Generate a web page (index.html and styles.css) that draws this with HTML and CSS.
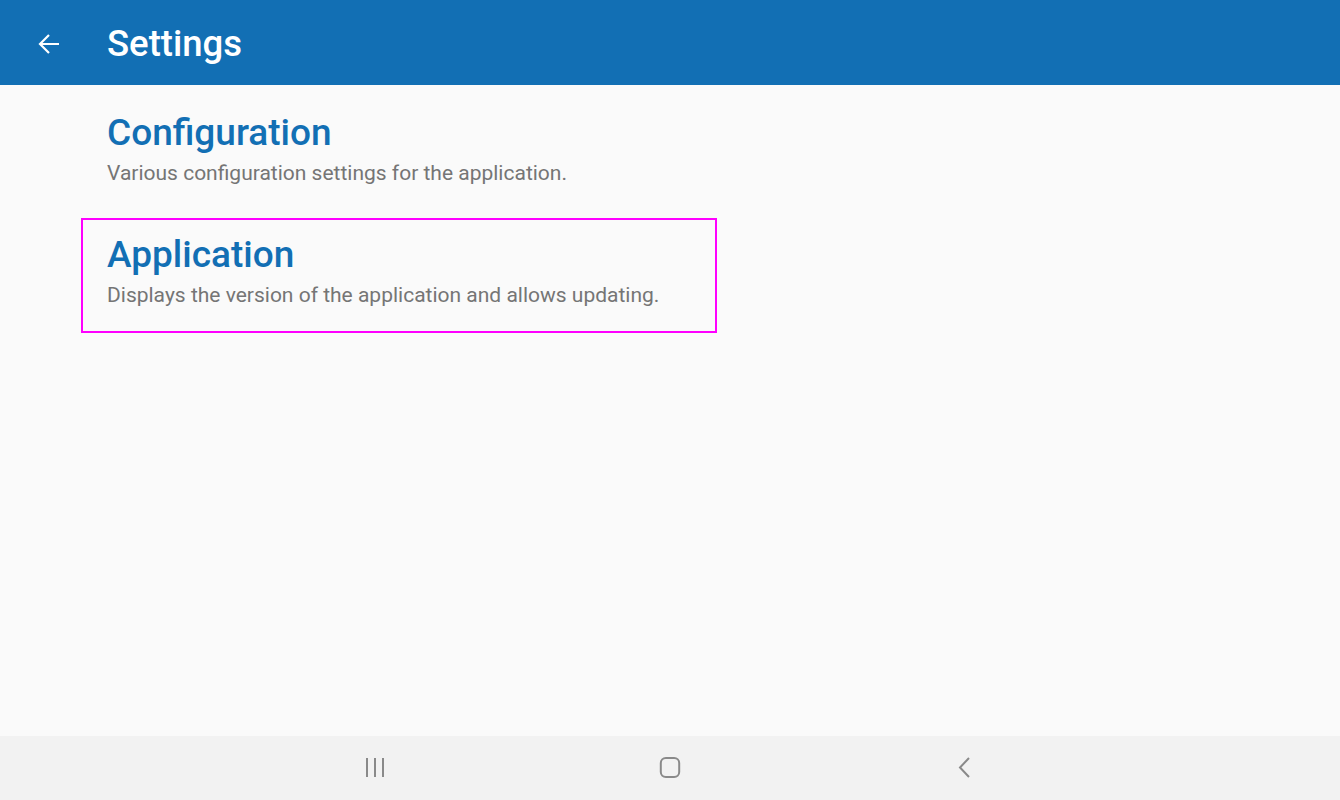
FILE: index.html
```html
<!DOCTYPE html>
<html>
<head>
<meta charset="utf-8">
<link rel="stylesheet" href="styles.css">
</head>
<body>
<div class="app">
  <header class="appbar">
    <button class="back" aria-label="Back">
      <svg width="24" height="24" viewBox="0 0 24 24"><path d="M22 12H3.5M12 3L3 12l9 9" fill="none" stroke="#fff" stroke-width="2.2"/></svg>
    </button>
    <h1 class="title">Settings</h1>
  </header>
  <main class="content">
    <div class="item">
      <div class="item-title">Configuration</div>
      <div class="item-sub">Various configuration settings for the application.</div>
    </div>
    <div class="item focused">
      <div class="item-title">Application</div>
      <div class="item-sub">Displays the version of the application and allows updating.</div>
    </div>
  </main>
  <nav class="navbar">
    <div class="nav-btn">
      <svg width="24" height="24" viewBox="0 0 24 24"><g fill="#8a8a8a"><rect x="2" y="2" width="2" height="19"/><rect x="10" y="2" width="2" height="19"/><rect x="18" y="2" width="2" height="19"/></g></svg>
    </div>
    <div class="nav-btn">
      <svg width="24" height="24" viewBox="0 0 24 24"><rect x="2.8" y="2" width="18.4" height="19" rx="5" fill="none" stroke="#8a8a8a" stroke-width="2"/></svg>
    </div>
    <div class="nav-btn">
      <svg width="24" height="24" viewBox="0 0 24 24"><path d="M17 2 L8 11.5 L17 21" fill="none" stroke="#8a8a8a" stroke-width="2"/></svg>
    </div>
  </nav>
</div>
</body>
</html>
```

FILE: styles.css
```css
* { box-sizing: border-box; }
html, body { margin: 0; padding: 0; }
body {
  font-family: Roboto, "Noto Sans", sans-serif;
  background: #fafafa;
  width: 1340px;
  height: 800px;
  overflow: hidden;
}
.app {
  display: flex;
  flex-direction: column;
  height: 800px;
}
.appbar {
  height: 85px;
  background: #126fb4;
  display: flex;
  align-items: center;
  padding-top: 2px;
  flex-shrink: 0;
}
.back {
  width: 48px;
  height: 48px;
  margin-left: 25px;
  margin-right: 34px;
  border: 0;
  background: transparent;
  display: flex;
  align-items: center;
  justify-content: center;
  padding: 0;
}
.title {
  margin: 0;
  color: #fff;
  font-size: 36.5px;
  font-weight: 500;
  letter-spacing: 0;
}
.content {
  flex: 1;
  padding: 11px 0 0 81px;
  display: flex;
  flex-direction: column;
  gap: 7px;
}
.item {
  width: 636px;
  padding: 11px 24px 20px 24px;
  border: 2px solid transparent;
}
.item.focused {
  border-color: #ff00ff;
}
.item-title {
  color: #126fb4;
  font-size: 37px;
  font-weight: 500;
  line-height: 48px;
}
.item-sub {
  color: #757575;
  font-size: 21px;
  line-height: 32px;
}
.navbar {
  height: 64px;
  background: #f2f2f2;
  display: flex;
  justify-content: center;
  align-items: center;
  gap: 270px;
  flex-shrink: 0;
}
.nav-btn {
  width: 24px;
  height: 24px;
  display: flex;
}
```
